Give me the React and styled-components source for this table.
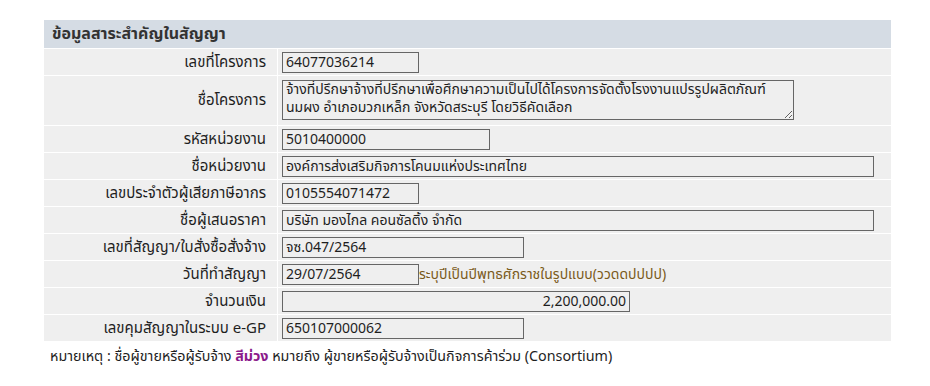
import React from 'react';
import styled, { createGlobalStyle } from 'styled-components';

const GlobalStyle = createGlobalStyle`
  body {
    margin: 0;
    background: #fff;
    font-family: Tahoma, "Noto Sans Thai", "Noto Sans", "DejaVu Sans", sans-serif;
    font-size: 14px;
    color: #1e1e1e;
  }
`;

const Page = styled.div`
  padding: 20px 0 0 44px;
`;

const Table = styled.table`
  width: 849px;
  border-collapse: separate;
  border-spacing: 1px;
  margin: -1px 0 0 -1px;
`;

const HeadCell = styled.th`
  background: #d5dce4;
  color: #333;
  text-align: left;
  font-weight: bold;
  font-size: 16px;
  height: 28px;
  padding: 0 8px;
`;

const Label = styled.td`
  background: #efefef;
  width: 222px;
  text-align: right;
  padding: 0 11px 0 0;
  height: 26px;
  font-size: 15px;
  white-space: nowrap;
`;

const Value = styled.td`
  background: #efefef;
  padding: 2px 4px;
  height: 22px;
`;

const Field = styled.input`
  box-sizing: border-box;
  width: ${p => p.$w}px;
  height: 21px;
  border: 1px solid #666;
  background: #efefef;
  font: inherit;
  color: #1e1e1e;
  padding: 0 3px;
  margin: 0;
  text-align: ${p => (p.$right ? 'right' : 'left')};
  vertical-align: middle;
`;

const Area = styled.textarea`
  box-sizing: border-box;
  width: 512px;
  height: 40px;
  border: 1px solid #666;
  background: #efefef;
  font: inherit;
  line-height: 18px;
  color: #1e1e1e;
  padding: 0 3px;
  margin: 2px 0 3px;
  display: block;
  resize: vertical;
  overflow: hidden;
`;

const Hint = styled.span`
  color: #7a5a1a;
  vertical-align: middle;
`;

const Note = styled.p`
  margin: 4px 0 0 6px;
  font-size: 14.3px;
`;

const Purple = styled.span`
  color: #8b1a8b;
  font-weight: bold;
`;

const rows = [
  { label: 'เลขที่โครงการ', value: '64077036214', w: 137 },
  {
    label: 'ชื่อโครงการ',
    area: 'จ้างที่ปรึกษาจ้างที่ปรึกษาเพื่อศึกษาความเป็นไปได้โครงการจัดตั้งโรงงานแปรรูปผลิตภัณฑ์นมผง อำเภอมวกเหล็ก จังหวัดสระบุรี โดยวิธีคัดเลือก',
  },
  { label: 'รหัสหน่วยงาน', value: '5010400000', w: 208 },
  { label: 'ชื่อหน่วยงาน', value: 'องค์การส่งเสริมกิจการโคนมแห่งประเทศไทย', w: 592 },
  { label: 'เลขประจำตัวผู้เสียภาษีอากร', value: '0105554071472', w: 137 },
  { label: 'ชื่อผู้เสนอราคา', value: 'บริษัท มองไกล คอนซัลติ้ง จำกัด', w: 592 },
  { label: 'เลขที่สัญญา/ใบสั่งซื้อสั่งจ้าง', value: 'จซ.047/2564', w: 242 },
  {
    label: 'วันที่ทำสัญญา',
    value: '29/07/2564',
    w: 137,
    hint: 'ระบุปีเป็นปีพุทธศักราชในรูปแบบ(ววดดปปปป)',
  },
  { label: 'จำนวนเงิน', value: '2,200,000.00', w: 348, right: true },
  { label: 'เลขคุมสัญญาในระบบ e-GP', value: '650107000062', w: 242 },
];

export default function App() {
  return (
    <Page>
      <GlobalStyle />
      <Table>
        <thead>
          <tr>
            <HeadCell colSpan={2}>ข้อมูลสาระสำคัญในสัญญา</HeadCell>
          </tr>
        </thead>
        <tbody>
          {rows.map(r => (
            <tr key={r.label}>
              <Label>{r.label}</Label>
              <Value>
                {r.area ? (
                  <Area defaultValue={r.area} readOnly />
                ) : (
                  <>
                    <Field $w={r.w} $right={r.right} defaultValue={r.value} readOnly />
                    {r.hint && <Hint>{r.hint}</Hint>}
                  </>
                )}
              </Value>
            </tr>
          ))}
        </tbody>
      </Table>
      <Note>
        หมายเหตุ : ชื่อผู้ขายหรือผู้รับจ้าง <Purple>สีม่วง</Purple> หมายถึง ผู้ขายหรือผู้รับจ้างเป็นกิจการค้าร่วม (Consortium)
      </Note>
    </Page>
  );
}
